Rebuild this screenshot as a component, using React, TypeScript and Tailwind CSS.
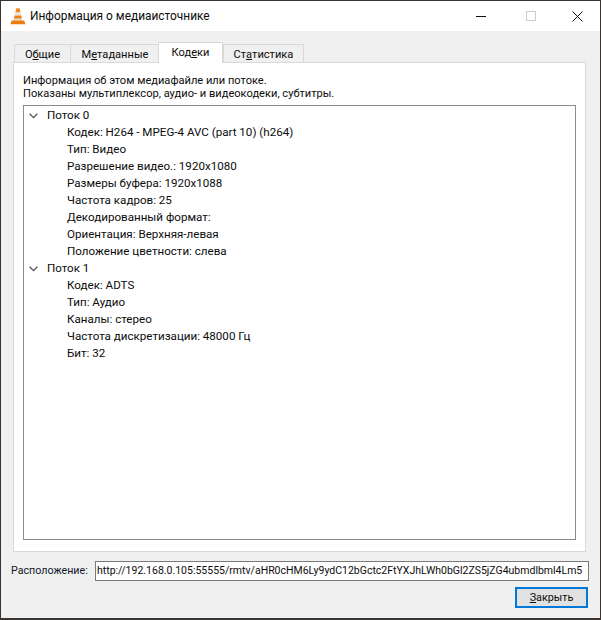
import React from 'react';

const streams = [
  {
    title: 'Поток 0',
    rows: [
      'Кодек: H264 - MPEG-4 AVC (part 10) (h264)',
      'Тип: Видео',
      'Разрешение видео.: 1920x1080',
      'Размеры буфера: 1920x1088',
      'Частота кадров: 25',
      'Декодированный формат:',
      'Ориентация: Верхняя-левая',
      'Положение цветности: слева',
    ],
  },
  {
    title: 'Поток 1',
    rows: ['Кодек: ADTS', 'Тип: Аудио', 'Каналы: стерео', 'Частота дискретизации: 48000 Гц', 'Бит: 32'],
  },
];

function VlcIcon() {
  return (
    <svg width="16" height="18" viewBox="0 0 16 18" className="shrink-0">
      <path d="M6.3 1.2h3.2l1 4.2H5.3z" fill="#f08a1c" />
      <path d="M5.3 5.4h5.2l.7 3H4.6z" fill="#e8e4de" />
      <path d="M4.6 8.4h6.6l.8 3.4H3.8z" fill="#f07f12" />
      <path d="M3.8 11.8h8.2l.5 1.9H3.2z" fill="#e0dcd6" />
      <path d="M1.6 13.6h12.6l1.2 3.6H.4z" fill="#ee7c10" />
    </svg>
  );
}

function Tab({ label, hot, className }: { label: string; hot: number; className: string }) {
  return (
    <div className={'border border-b-0 border-[#d9d9d9] text-center ' + className}>
      {label.slice(0, hot)}
      <span className="underline">{label[hot]}</span>
      {label.slice(hot + 1)}
    </div>
  );
}

export default function App() {
  return (
    <div className="flex h-[620px] w-[601px] flex-col border-x border-t border-b-2 border-[#3a3430] bg-[#f0f0f0] font-['Roboto',sans-serif] text-[11.1px] leading-[17px] text-[#0c0c0c]">
      <div className="flex h-[30px] shrink-0 items-center bg-white pl-[9px]">
        <VlcIcon />
        <span className="ml-[4px] text-[11.9px]">Информация о медиаисточнике</span>
        <div className="ml-auto flex items-center">
          <svg width="12" height="12" viewBox="0 0 12 12" className="mr-[39px]">
            <path d="M1 6.5h10" stroke="#111" fill="none" />
          </svg>
          <svg width="10" height="10" viewBox="0 0 10 10" className="mr-[36px]">
            <rect x="0.5" y="0.5" width="9" height="9" stroke="#ccc" fill="none" />
          </svg>
          <svg width="11" height="11" viewBox="0 0 11 11" className="mr-[17px]">
            <path d="M.5.5l10 10M10.5.5l-10 10" stroke="#111" fill="none" />
          </svg>
        </div>
      </div>

      <div className="flex min-h-0 flex-1 flex-col pl-[12px] pr-[14px] pt-[11px]">
        <div className="flex h-[20px] shrink-0 items-start pl-[1px]">
          <Tab label="Общие" hot={1} className="mt-[2px] h-[18px] w-[57px] bg-[#f0f0f0] leading-[19px]" />
          <Tab label="Метаданные" hot={1} className="-ml-px mt-[2px] h-[18px] w-[90px] bg-[#f0f0f0] leading-[19px]" />
          <Tab label="Кодеки" hot={3} className="relative z-10 -ml-[2px] h-[21px] w-[65px] bg-white pt-[1px] leading-[18px]" />
          <Tab label="Статистика" hot={2} className="mt-[2px] h-[18px] w-[81px] bg-[#f0f0f0] leading-[19px]" />
        </div>
        <div className="flex h-[490px] shrink-0 flex-col border border-[#d9d9d9] bg-white px-[9px] pb-[11px] pt-[11px]">
          <p className="h-[13px] leading-[13px]">Информация об этом медиафайле или потоке.</p>
          <p className="h-[13px] leading-[13px]">Показаны мультиплексор, аудио- и видеокодеки, субтитры.</p>
          <div className="mt-[5px] min-h-0 flex-1 border border-[#8c8c8c] bg-white pt-[1px] text-[11.6px]">
            {streams.map((stream) => (
              <div key={stream.title}>
                <div className="flex h-[17px] items-center pl-[5px]">
                  <svg width="9" height="6" viewBox="0 0 9 6" className="mr-[9px] shrink-0">
                    <path d="M.7.7L4.5 4.6 8.3.7" stroke="#555" strokeWidth="1.3" fill="none" />
                  </svg>
                  {stream.title}
                </div>
                {stream.rows.map((row) => (
                  <div key={row} className="h-[17px] pl-[43px]">
                    {row}
                  </div>
                ))}
              </div>
            ))}
          </div>
        </div>

        <div className="mt-[8px] flex h-[21px] shrink-0 items-center">
          <span className="-ml-[2px] w-[84px] shrink-0 text-[10.7px] text-[#10182a]">Расположение:</span>
          <div className="mr-[-3px] flex h-[20px] min-w-0 flex-1 items-center whitespace-nowrap border border-[#7a7a7a] bg-white pl-[1px] text-[10.5px]">
            http://192.168.0.105:55555/rmtv/aHR0cHM6Ly9ydC12bGctc2FtYXJhLWh0bGl2ZS5jZG4ubmdlbml4Lm5
          </div>
        </div>
        <div className="mr-[-2px] mt-[6px] flex justify-end">
          <button className="h-[21px] w-[73px] border-2 border-[#0078d7] bg-[#e1e1e1] text-[10.8px] leading-[15px] text-[#0c0c0c]">
            <span className="underline">З</span>акрыть
          </button>
        </div>
      </div>
    </div>
  );
}
